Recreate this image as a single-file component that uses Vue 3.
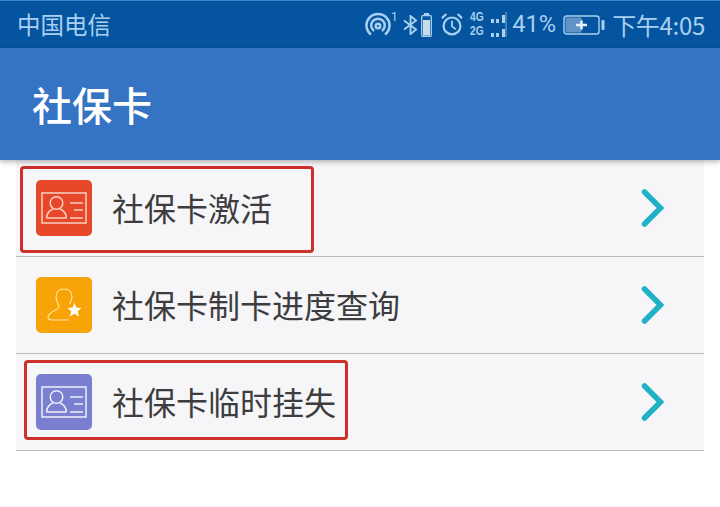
<script setup>
const rows = [
  { label: '社保卡激活', icon: 'card', color: 'red' },
  { label: '社保卡制卡进度查询', icon: 'user', color: 'amber' },
  { label: '社保卡临时挂失', icon: 'card', color: 'violet' },
]
</script>

<template>
  <div class="page">
    <div class="status">
      <span class="carrier">中国电信</span>
      <div class="status-right">
        <svg class="i-hot" width="32" height="28" viewBox="0 0 32 28" fill="none" stroke="#a9d0ef" stroke-width="2.5">
          <path d="M6 23.500 A11.500 11.500 0 1 1 20 23.500" />
          <path d="M9 20 A6.800 6.800 0 1 1 17 20" />
          <circle cx="13" cy="15" r="2.300" />
          <text x="26" y="10" font-size="12" font-family="Roboto, sans-serif" fill="#a9d0ef" stroke="none">1</text>
        </svg>
        <svg class="i-bt" width="15" height="20" viewBox="0 0 15 20" fill="none" stroke="#a9d0ef" stroke-width="1.900">
          <path d="M1 5.500 L13 14.500 L7.500 19 V1 L13 5.500 L1 14.500" />
        </svg>
        <svg class="i-sbat" width="11" height="24" viewBox="0 0 11 24">
          <rect x="3" y="0" width="5" height="2.500" fill="#a9d0ef" />
          <rect x="0.700" y="2.500" width="9.600" height="21" rx="1.500" fill="none" stroke="#a9d0ef" stroke-width="1.300" />
          <rect x="2" y="7" width="7" height="15.500" fill="#c9dcec" />
        </svg>
        <svg class="i-alarm" width="22" height="23" viewBox="1.500 1.500 23 24" fill="none" stroke="#a9d0ef" stroke-width="2.300">
          <circle cx="13" cy="15" r="8.800" />
          <path d="M13 9.500 V15.500 L17 18.500" stroke-width="1.900" />
          <path d="M2.500 7 L7 2.500 M23.500 7 L19 2.500" />
        </svg>
        <div class="net">
          <div class="net-line"><span>4G</span><i class="d1"></i><i class="d1"></i><i class="d3"></i></div>
          <div class="net-line"><span>2G</span><i class="d1"></i><i class="d1"></i><i class="d3"></i></div>
        </div>
        <span class="percent">41%</span>
        <svg class="i-bat" width="42" height="20" viewBox="0 0 42 20">
          <rect x="1" y="1" width="35" height="18" rx="2.500" fill="none" stroke="#a9d0ef" stroke-width="1.400" />
          <rect x="2.500" y="2.500" width="16" height="15" fill="#5f94c6" />
          <path d="M13 10 H24 M18.500 5.500 V14.500" stroke="#e6f0f8" stroke-width="2.600" />
          <rect x="38.500" y="5" width="3" height="10" rx="1" fill="#a9d0ef" />
        </svg>
        <span class="clock">下午4:05</span>
      </div>
    </div>

    <header class="appbar">社保卡</header>

    <ul class="list">
      <li v-for="(row, i) in rows" :key="row.label" class="row" :class="`row-${i}`">
        <span class="tile" :class="row.color">
          <svg v-if="row.icon === 'card'" width="46" height="32" viewBox="0 0 46 32" fill="none" stroke="currentColor" stroke-width="1.500">
            <rect x="1" y="1" width="44" height="30" />
            <circle cx="15.500" cy="11" r="6.300" />
            <path d="M5.500 26 C6 20 9.500 18 12 17 M25.500 26 C25 20 21.500 18 19 17 M5.500 26 H25.500" />
            <path d="M29 11 H42 M33 18 H42 M29 26 H42" />
          </svg>
          <svg v-else width="40" height="42" viewBox="0 0 40 42" fill="none">
            <path d="M20 5 C14 5 12 9 12 13 C12 18 15 20 15 23 C15 26 5 27 4 33 C4 35 6 36 8 36 H25 M20 5 C26 5 28 9 28 13 C28 16 26.500 18 25.500 20" stroke="#ffe9a6" stroke-width="1.100" />
            <path d="M30.500 19 L32.500 23.500 L37.500 24 L33.800 27.300 L35 32.500 L30.500 29.800 L26 32.500 L27.200 27.300 L23.500 24 L28.500 23.500 Z" fill="#fffdf5" />
          </svg>
        </span>
        <span class="label">{{ row.label }}</span>
        <svg class="chev" width="26" height="38" viewBox="0 0 26 38" fill="none">
          <path d="M5.500 3 L21.500 19 L5.500 35" stroke="#1fb1c6" stroke-width="5.500" stroke-linecap="round" />
        </svg>
        <span v-if="i !== 1" class="mark"></span>
      </li>
    </ul>
  </div>
</template>

<style>
html, body { margin: 0; background: #fff; }
</style>

<style scoped>
.page {
  width: 720px;
  height: 507px;
  overflow: hidden;
  background: #fff;
  font-family: "Noto Sans CJK SC", "Liberation Sans", sans-serif;
}
.status {
  height: 48px;
  box-sizing: border-box;
  border-top: 1px solid #3a84c8;
  background: #04549f;
  color: #a9d0ef;
  display: flex;
  align-items: center;
  justify-content: space-between;
  padding: 0 15px 0 17px;
}
.carrier { font-size: 23.500px; line-height: 1; }
.status-right { display: flex; align-items: center; }
.i-hot { margin-right: 6px; }
.i-bt { margin-right: 3px; }
.i-sbat { margin-right: 9px; }
.i-alarm { margin-right: 7px; }
.net {
  width: 37px;
  box-sizing: border-box;
  margin-right: 5px;
  display: flex;
  flex-direction: column;
  gap: 3.500px;
  border-right: 2px solid #4b80b4;
}
.net-line { display: flex; align-items: flex-end; gap: 2.500px; height: 10.500px; }
.net-line span {
  font: 700 12px/10.500px "Liberation Sans", sans-serif;
  width: 16px;
  margin-right: 2px;
  transform: scaleX(0.85);
  transform-origin: left;
}
.net-line i { display: block; width: 3px; background: #a9d0ef; }
.d1 { height: 4px; }
.d3 { height: 8px; }
.percent {
  font: 23.600px/1 Roboto, "Liberation Sans", sans-serif;
  margin-right: 7px;
}
.i-bat { margin-right: 7px; }
.clock {
  font-size: 24px;
  line-height: 1;
  letter-spacing: -0.3px;
  white-space: nowrap;
}
.appbar {
  height: 112px;
  box-sizing: border-box;
  padding-left: 32px;
  display: flex;
  align-items: center;
  background: #3573c3;
  color: #fff;
  font-size: 40px;
  font-weight: 500;
  box-shadow: 0 2px 5px rgba(0, 0, 0, 0.28);
  position: relative;
  z-index: 1;
}
.list {
  list-style: none;
  margin: 0 16px;
  padding: 0;
  color: #3d3d3f;
}
.row {
  position: relative;
  display: flex;
  align-items: center;
  box-sizing: border-box;
  height: 97px;
  padding-left: 20px;
  background: #f6f6f8;
  border-bottom: 1px solid #bcbcbc;
}
.tile {
  width: 56px;
  height: 56px;
  flex: none;
  border-radius: 5px;
  display: flex;
  align-items: center;
  justify-content: center;
}
.red { background: #e8482a; color: #fad0c2; }
.amber { background: #f8a307; }
.violet { background: #7a7fcf; color: #eeeffa; }
.label {
  margin-left: 20px;
  padding-bottom: 2px;
  font-size: 32px;
  line-height: 1;
  flex: 1;
}
.chev { margin-right: 39px; flex: none; }
.mark {
  position: absolute;
  box-sizing: border-box;
  border: 3px solid #cd2f2b;
  border-radius: 4px;
  pointer-events: none;
}
.row-0 .mark { left: 4px; top: 6px; width: 294px; height: 87px; }
.row-2 .mark { left: 8px; top: 6px; width: 324px; height: 80px; }
</style>
